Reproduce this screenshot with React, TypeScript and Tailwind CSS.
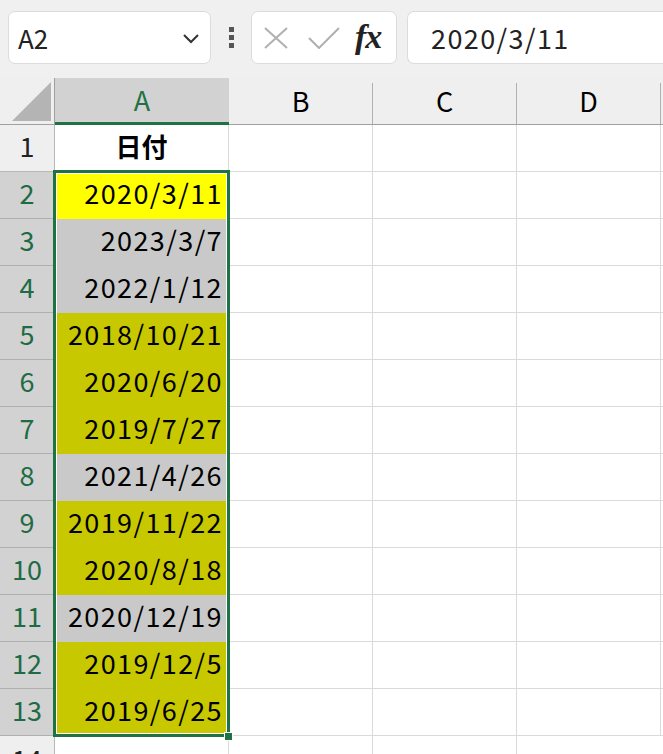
import React from "react";

// Zellwerte der Spalte A (Zeile 2-13) mit Hintergrundfarbe
const rows: { value: string; fill: string }[] = [
  { value: "2020/3/11", fill: "bg-[#ffff00]" },
  { value: "2023/3/7", fill: "bg-[#c9c9c9]" },
  { value: "2022/1/12", fill: "bg-[#c9c9c9]" },
  { value: "2018/10/21", fill: "bg-[#c8c800]" },
  { value: "2020/6/20", fill: "bg-[#c8c800]" },
  { value: "2019/7/27", fill: "bg-[#c8c800]" },
  { value: "2021/4/26", fill: "bg-[#c9c9c9]" },
  { value: "2019/11/22", fill: "bg-[#c8c800]" },
  { value: "2020/8/18", fill: "bg-[#c8c800]" },
  { value: "2020/12/19", fill: "bg-[#c9c9c9]" },
  { value: "2019/12/5", fill: "bg-[#c8c800]" },
  { value: "2019/6/25", fill: "bg-[#c8c800]" },
];

const font = "font-['Noto_Sans_CJK_JP','Noto_Sans',sans-serif]";

const EmptyCells: React.FC = () => (
  <>
    <div className="h-[47px] border-r border-b border-[#dadada] bg-white"></div>
    <div className="h-[47px] border-r border-b border-[#dadada] bg-white"></div>
    <div className="h-[47px] border-r border-b border-[#dadada] bg-white"></div>
    <div className="h-[47px] border-b border-[#dadada] bg-white"></div>
  </>
);

const App: React.FC = () => {
  return (
    <div className={`w-[663px] h-[754px] overflow-hidden bg-white ${font} text-black`}>
      {/* --- Formelleiste --- */}
      <div className="h-[78px] bg-[#f0f0f0] flex items-start pt-[11px] pl-[8px]">
        <div className="w-[203px] h-[53px] bg-white border border-[#dcdcdc] rounded-[7px] flex items-center pl-[9px] pr-[10px]">
          <span className="text-[26px] leading-none text-[#222]">A2</span>
          <svg className="ml-auto" width="18" height="12" viewBox="0 0 18 12">
            <path d="M2 3 L9 10 L16 3" fill="none" stroke="#333" strokeWidth="2" />
          </svg>
        </div>
        <div className="w-[40px] h-[53px] flex flex-col items-center justify-center gap-[3px]">
          <div className="w-[5px] h-[5px] bg-[#555]"></div>
          <div className="w-[5px] h-[5px] bg-[#555]"></div>
          <div className="w-[5px] h-[5px] bg-[#555]"></div>
        </div>
        <div className="w-[146px] h-[53px] bg-white border border-[#dcdcdc] rounded-[7px] flex items-center pl-[11px] gap-[19px]">
          <svg width="26" height="22" viewBox="0 0 26 22">
            <path d="M2 1 L24 21 M24 1 L2 21" stroke="#b0b0b0" strokeWidth="2" fill="none" />
          </svg>
          <svg width="32" height="22" viewBox="0 0 32 22">
            <path d="M1 11 L11 21 L31 1" stroke="#b0b0b0" strokeWidth="2" fill="none" />
          </svg>
          <span className="font-['Liberation_Serif',serif] italic font-bold text-[34px] leading-none text-[#222] -ml-[4px] -mt-[2px] tracking-[-1px]">
            fx
          </span>
        </div>
        <div className="ml-[10px] flex-1 h-[53px] bg-white border border-[#dcdcdc] border-r-0 rounded-l-[7px] flex items-center pl-[23px]">
          <span className="text-[27px] leading-none text-[#222] tracking-[1.4px]">2020/3/11</span>
        </div>
      </div>

      {/* --- Tabellenraster --- */}
      <div className="relative">
        <div className="grid grid-cols-[55px_174px_144px_144px_144px_1fr]">
          {/* Spaltenköpfe */}
          <div className="h-[47px] bg-[#efefef] border-r border-b border-[#a0a0a0] relative">
            <svg className="absolute left-[12px] top-[4px]" width="40" height="40" viewBox="0 0 40 40">
              <polygon points="0,39 39,0 39,39" fill="#b4b4b4" />
            </svg>
          </div>
          <div className="h-[47px] bg-[#d2d2d2] border-b-[3px] border-[#1f7244] flex items-center justify-center text-[27px] text-[#1f7244]">
            A
          </div>
          {["B", "C", "D"].map((c) => (
            <div
              key={c}
              className="h-[47px] bg-[#efefef] border-b border-[#a0a0a0] flex items-stretch"
            >
              <div className="flex-1 flex items-center justify-center text-[27px]">{c}</div>
              <div className="w-px mt-[5px] bg-[#b0b0b0]"></div>
            </div>
          ))}
          <div className="h-[47px] bg-[#efefef] border-b border-[#a0a0a0]"></div>

          {/* Zeile 1 */}
          <div className="h-[47px] bg-[#efefef] border-r border-b border-[#b8b8b8] flex items-center justify-center pb-[4px] text-[27px] text-[#222]">
            1
          </div>
          <div className="h-[47px] border-r border-b border-[#dadada] bg-white flex items-center justify-center pb-[5px] text-[26px] font-bold">
            日付
          </div>
          <EmptyCells />

          {/* Zeilen 2-13 */}
          {rows.map((r, i) => (
            <React.Fragment key={i}>
              <div className="h-[47px] bg-[#d2d2d2] border-r border-b border-[#b0b0b0] flex items-center justify-center pb-[3px] text-[27px] text-[#1f6b45]">
                {i + 2}
              </div>
              <div
                className={`h-[47px] ${r.fill} border-r border-[#dadada] flex items-center justify-end pr-[5px] pb-[4px] text-[27px] tracking-[1.4px]`}
              >
                {r.value}
              </div>
              <EmptyCells />
            </React.Fragment>
          ))}

          {/* Zeile 14 */}
          <div className="h-[47px] bg-[#efefef] border-r border-[#b8b8b8] flex items-start justify-center pt-[3px] text-[27px] text-[#222]">
            14
          </div>
          <div className="h-[47px] border-r border-[#dadada] bg-white"></div>
          <div className="h-[47px] border-r border-[#dadada] bg-white"></div>
          <div className="h-[47px] border-r border-[#dadada] bg-white"></div>
          <div className="h-[47px] bg-white"></div>
          <div className="h-[47px] bg-white"></div>
        </div>

        {/* Auswahlrahmen A2:A13 */}
        <div className="absolute left-[53px] top-[92px] w-[177px] h-[567px] border-[3px] border-[#1f7244] shadow-[inset_0_0_0_1px_#ffffff] pointer-events-none"></div>
        <div className="absolute left-[224px] top-[654px] w-[9px] h-[9px] bg-[#1f7244] border border-white"></div>
      </div>
    </div>
  );
};

export default App;
